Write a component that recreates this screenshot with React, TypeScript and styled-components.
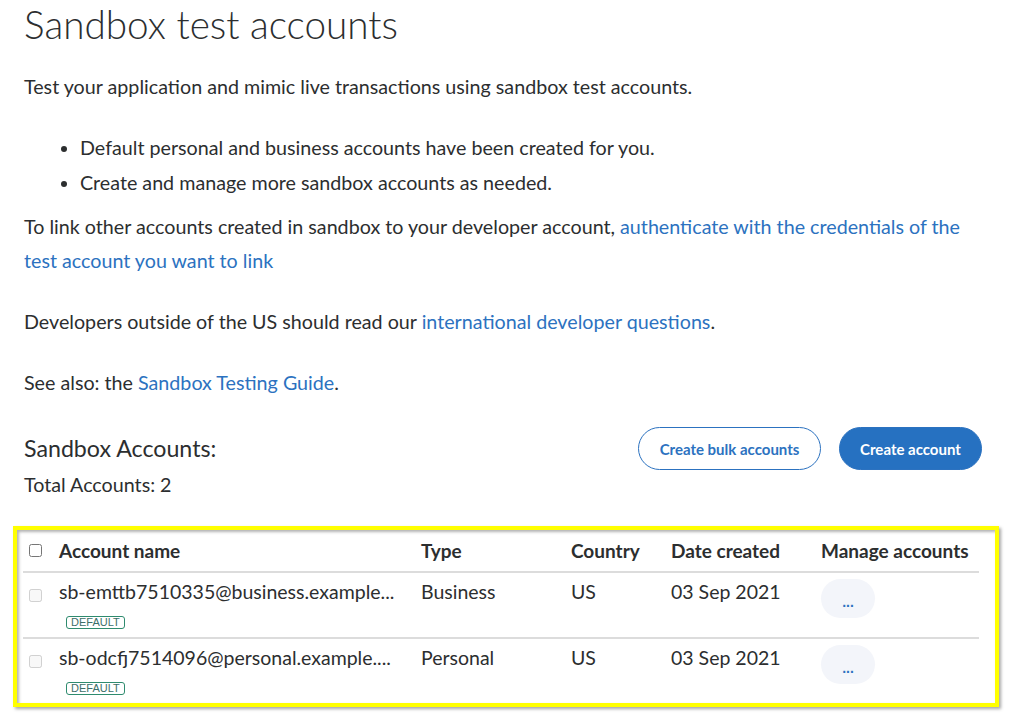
import styled, { createGlobalStyle } from "styled-components";

const GlobalStyle = createGlobalStyle`
  body {
    margin: 0;
    background: #ffffff;
    color: #2c2e2f;
    font-family: Lato, "Noto Sans", sans-serif;
  }
`;

const ACCOUNTS = [
  { email: "sb-emttb7510335@business.example...", type: "Business", country: "US", created: "03 Sep 2021" },
  { email: "sb-odcfj7514096@personal.example....", type: "Personal", country: "US", created: "03 Sep 2021" },
];

const App = function App() {
  return (
    <>
      <GlobalStyle />
      <Style.Page>
        <Style.Title>Sandbox test accounts</Style.Title>
        <Style.Text $gap={22}>
          Test your application and mimic live transactions using sandbox test accounts.
        </Style.Text>
        <Style.List>
          <li>Default personal and business accounts have been created for you.</li>
          <li>Create and manage more sandbox accounts as needed.</li>
        </Style.List>
        <Style.Text $gap={10}>
          To link other accounts created in sandbox to your developer account,{" "}
          <Style.Link href="#">authenticate with the credentials of the test account you want to link</Style.Link>
        </Style.Text>
        <Style.Text>
          Developers outside of the US should read our{" "}
          <Style.Link href="#">international developer questions</Style.Link>.
        </Style.Text>
        <Style.Text>
          See also: the <Style.Link href="#">Sandbox Testing Guide</Style.Link>.
        </Style.Text>

        <Style.AccountsBar>
          <Style.AccountsInfo>
            <Style.SubTitle>Sandbox Accounts:</Style.SubTitle>
            <Style.Total>Total Accounts: 2</Style.Total>
          </Style.AccountsInfo>
          <Style.Actions>
            <Style.Button $variant="outline" $width={183}>Create bulk accounts</Style.Button>
            <Style.Button $variant="solid" $width={143}>Create account</Style.Button>
          </Style.Actions>
        </Style.AccountsBar>

        <Style.Highlight>
          <Style.Table>
            <Style.HeadRow>
              <Style.CheckCell>
                <Style.Check type="checkbox" />
              </Style.CheckCell>
              <div>Account name</div>
              <div>Type</div>
              <div>Country</div>
              <div>Date created</div>
              <div>Manage accounts</div>
            </Style.HeadRow>
            {ACCOUNTS.map((account) => (
              <Style.Row key={account.email}>
                <Style.CheckCell $top={9}>
                  <Style.Check type="checkbox" disabled />
                </Style.CheckCell>
                <div>
                  <div>{account.email}</div>
                  <Style.Badge>DEFAULT</Style.Badge>
                </div>
                <div>{account.type}</div>
                <div>{account.country}</div>
                <div>{account.created}</div>
                <div>
                  <Style.MoreButton>...</Style.MoreButton>
                </div>
              </Style.Row>
            ))}
          </Style.Table>
        </Style.Highlight>
      </Style.Page>
    </>
  );
};

export default App;

const COLUMNS = "36px 362px 150px 100px 150px 1fr";

const Style = {
  Page: styled.main`
    padding: 0 44px 10px 24px;
    font-size: 19.7px;
  `,
  Title: styled.h1`
    margin: 0;
    font-size: 38.7px;
    font-weight: 300;
    line-height: 48px;
  `,
  Text: styled.p<{ $gap?: number }>`
    margin: ${(p) => p.$gap ?? 27}px 0 0;
    line-height: 34px;
  `,
  Link: styled.a`
    color: #2c72c0;
    text-decoration: none;
  `,
  List: styled.ul`
    margin: 26px 0 0;
    padding-left: 56px;
    line-height: 35px;
  `,
  AccountsBar: styled.div`
    display: flex;
    justify-content: space-between;
    align-items: flex-start;
    margin-top: 27px;
  `,
  AccountsInfo: styled.div`
    padding-top: 6px;
  `,
  SubTitle: styled.h2`
    margin: 0;
    font-size: 23.2px;
    font-weight: 400;
    line-height: 30px;
  `,
  Total: styled.div`
    line-height: 30px;
    margin-top: 7px;
  `,
  Actions: styled.div`
    display: flex;
    gap: 18px;
  `,
  Button: styled.button<{ $variant: "outline" | "solid"; $width: number }>`
    width: ${(p) => p.$width}px;
    height: 43px;
    border-radius: 22px;
    font-family: Lato, "Noto Sans", sans-serif;
    font-size: 15px;
    font-weight: 700;
    cursor: pointer;
    border: 1px solid #2c72c0;
    color: ${(p) => (p.$variant === "solid" ? "#ffffff" : "#2c72c0")};
    background: ${(p) => (p.$variant === "solid" ? "#2671c1" : "#ffffff")};
  `,
  Highlight: styled.div`
    margin: 26px -17px 0 -11px;
    border: 4px solid #ffff00;
    padding: 0 16px 0 6px;
    box-shadow: 2px 2px 3px rgba(0, 0, 0, 0.35),
      inset 2px 2px 3px rgba(0, 0, 0, 0.3);
  `,
  Table: styled.div`
    display: flex;
    flex-direction: column;
    font-size: 19.5px;
  `,
  HeadRow: styled.div`
    display: grid;
    grid-template-columns: ${COLUMNS};
    align-items: center;
    height: 41px;
    font-size: 19px;
    font-weight: 700;
    border-bottom: 2px solid #dcdcdc;
  `,
  Row: styled.div`
    display: grid;
    grid-template-columns: ${COLUMNS};
    align-items: start;
    padding: 7px 0 6px;
    line-height: 24px;
    border-bottom: 2px solid #dcdcdc;
    &:last-child {
      border-bottom: none;
    }
  `,
  CheckCell: styled.div<{ $top?: number }>`
    display: flex;
    padding-left: 6px;
    padding-top: ${(p) => p.$top ?? 0}px;
  `,
  Check: styled.input`
    margin: 0;
    width: 13px;
    height: 13px;
  `,
  Badge: styled.span`
    display: inline-block;
    margin: 12px 0 0 7px;
    padding: 0 4px;
    border: 1px solid #2e8b6e;
    border-radius: 3px;
    font-family: "Liberation Sans", Arial, sans-serif;
    font-size: 11px;
    line-height: 11px;
    color: #3d6f6a;
  `,
  MoreButton: styled.button`
    width: 54px;
    height: 39px;
    border: none;
    border-radius: 20px;
    background: #f3f5fa;
    color: #2c72c0;
    font-weight: 700;
    font-size: 14px;
    padding-top: 8px;
    cursor: pointer;
    margin-top: -1px;
  `,
};
